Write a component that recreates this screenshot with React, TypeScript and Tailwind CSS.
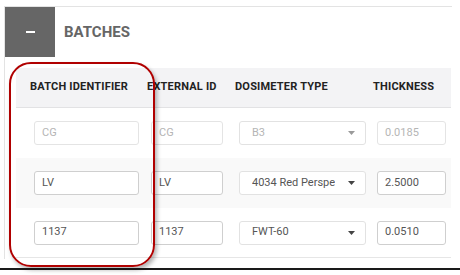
import React from "react";

function Caret({ light }: { light?: boolean }) {
  return (
    <svg width="7" height="4" viewBox="0 0 7 4" className="shrink-0">
      <path d="M0 0 L7 0 L3.5 4 Z" fill={light ? "#9a9a9a" : "#444"} />
    </svg>
  );
}

function Input({ value, w, disabled }: { value: string; w: string; disabled?: boolean }) {
  return (
    <div
      className={`${w} h-[24px] rounded-[3px] border flex items-center pl-[7px] text-[11px] ${
        disabled ? "border-[#e4e4e4] text-[#b5b5b5]" : "border-[#cfcfcf] text-[#555]"
      } bg-white`}
    >
      {value}
    </div>
  );
}

function Select({ value, disabled }: { value: string; disabled?: boolean }) {
  return (
    <div
      className={`w-[127px] h-[24px] rounded-[3px] border border-[#e2e2e2] bg-white flex items-center justify-between pl-[12px] pr-[10px] text-[11px] ${
        disabled ? "text-[#b5b5b5]" : "text-[#555]"
      }`}
    >
      <span className="whitespace-nowrap overflow-hidden">{value}</span>
      <Caret light={disabled} />
    </div>
  );
}

function Row({
  a,
  b,
  c,
  d,
  disabled,
  shaded,
  last,
}: {
  a: string;
  b: string;
  c: string;
  d: string;
  disabled?: boolean;
  shaded?: boolean;
  last?: boolean;
}) {
  return (
    <div
      className={`h-[50px] flex items-center pl-[18px] ${shaded ? "bg-[#f9f9f9]" : "bg-white"} ${
        last ? "border-b border-[#e6e6e6]" : ""
      }`}
    >
      <Input value={a} w="w-[105px]" disabled={disabled} />
      <div className="ml-[12px]">
        <Input value={b} w="w-[72px]" disabled={disabled} />
      </div>
      <div className="ml-[16px]">
        <Select value={c} disabled={disabled} />
      </div>
      <div className="ml-[11px]">
        <Input value={d} w="w-[69px]" disabled={disabled} />
      </div>
    </div>
  );
}

export default function App() {
  return (
    <div className="relative w-[460px] h-[275px] bg-white overflow-hidden font-['Roboto',_'Liberation_Sans',_sans-serif]">
      <div className="pt-[6px] pl-[4px]">
        <div className="w-[448px] h-[253px] border-t border-l border-[#e3e3e3]">
          <div className="flex items-center">
            <div className="w-[50px] h-[50px] bg-[#666666] flex items-center justify-center">
              <div className="w-[9px] h-[2px] bg-white" />
            </div>
            <span className="ml-[9px] text-[15px] font-bold text-[#666]">BATCHES</span>
          </div>
          <div className="mt-[11px] ml-[11px] w-[435px]">
            <div className="h-[40px] bg-[#f3f3f5] border-b border-[#e2e2e4] flex items-center pl-[14px] text-[11px] font-bold text-[#222] tracking-[0.2px] whitespace-nowrap">
              <div className="w-[117px]">BATCH IDENTIFIER</div>
              <div className="w-[88px]">EXTERNAL ID</div>
              <div className="w-[138px]">DOSIMETER TYPE</div>
              <div>THICKNESS</div>
            </div>
            <Row a="CG" b="CG" c="B3" d="0.0185" disabled />
            <Row a="LV" b="LV" c="4034 Red Perspe" d="2.5000" shaded />
            <Row a="1137" b="1137" c="FWT-60" d="0.0510" last />
          </div>
        </div>
      </div>
      <div className="absolute left-0 top-[268px] w-[460px] h-[2px] bg-[#1a1a1a]" />
      <div className="absolute left-[9px] top-[62px] w-[146px] h-[205px] rounded-[22px] border-2 border-[#b00000] shadow-[2px_3px_4px_rgba(0,0,0,0.3)]" />
    </div>
  );
}
